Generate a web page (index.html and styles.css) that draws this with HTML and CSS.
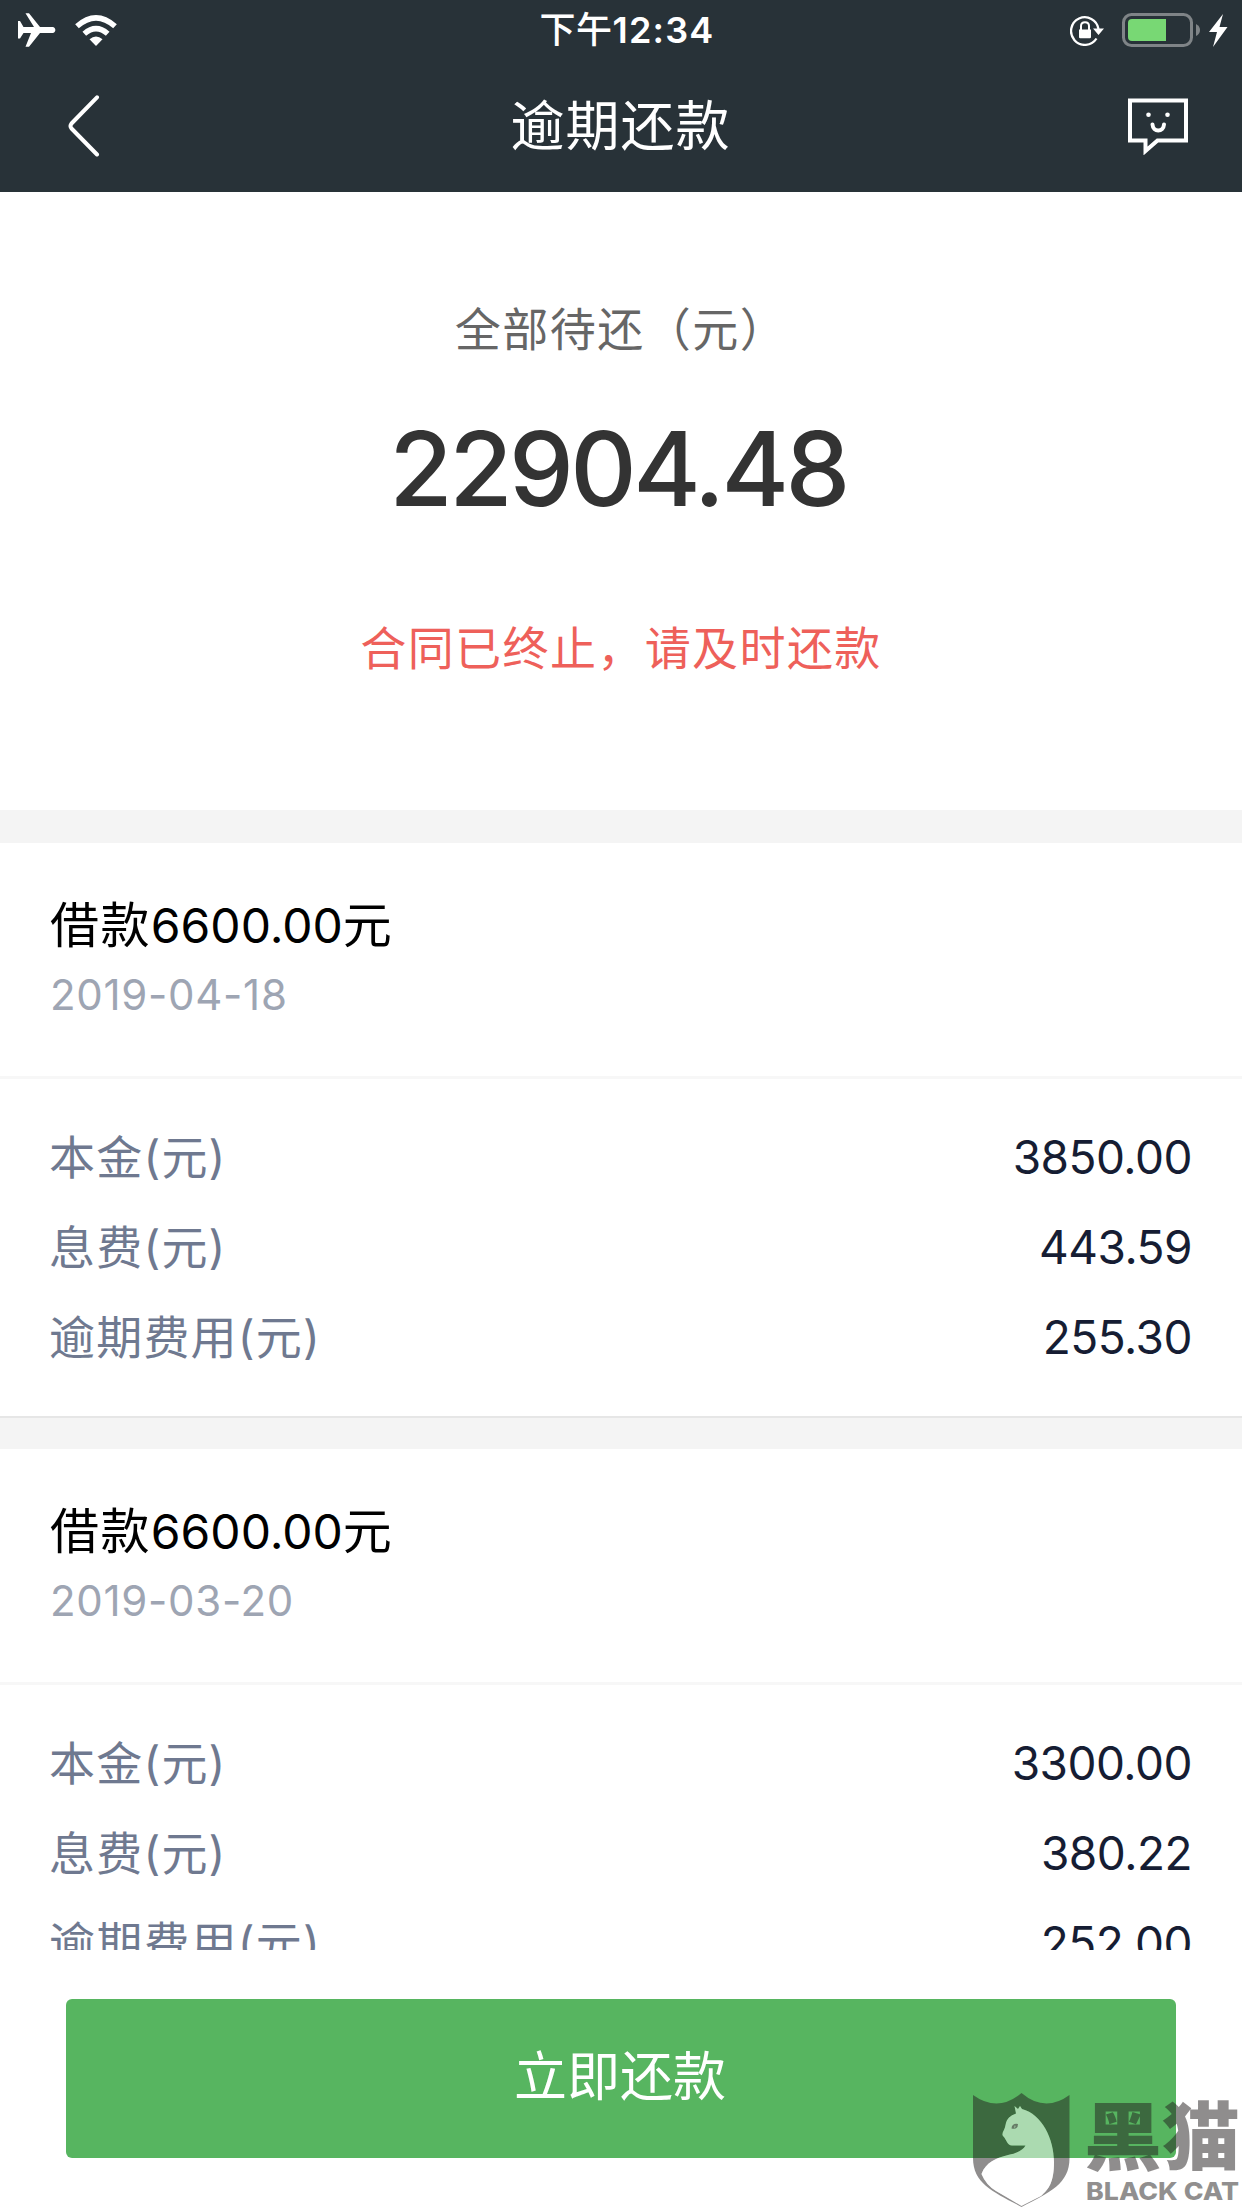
FILE: index.html
```
<!DOCTYPE html>
<html lang="zh-CN">
<head>
    <meta charset="UTF-8">
    <meta name="viewport" content="width=device-width, initial-scale=1.0">
    <title>逾期还款</title>
    <link rel="stylesheet" href="styles.css">
</head>
<body>
    <div class="app">
        <header class="header">
            <div class="status-bar">
                <div class="status-left">
                    <svg class="icon-plane" width="38" height="34" viewBox="0 0 38 34">
                        <path fill="#fff" d="M0 8H2L5.500 14H16L7.500 .3H11L22 14H34.500C38.300 14 38.300 20 34.500 20H22L11 33.700H7.500L13 20H5.500L2 25.500H0Z"/>
                    </svg>
                    <svg class="icon-wifi" width="42" height="31" viewBox="0 0 42 31">
                        <path fill="#fff" d="M21 31L14.500 24.300Q21 18.500 27.500 24.300Z"/>
                        <path fill="none" stroke="#fff" stroke-width="5.500" d="M9.300 18.800Q21 8.500 32.700 18.800M2 11.300Q21 -5.500 40 11.300"/>
                    </svg>
                </div>
                <div class="time">下午<span>12:34</span></div>
                <div class="status-right">
                    <svg class="icon-lock" width="34" height="31" viewBox="0 0 34 31">
                        <path fill="none" stroke="#fff" stroke-width="2.300" d="M26.500 23.500A13.800 13.800 0 1 1 28.500 14"/>
                        <path fill="#fff" d="M23 13.500H34L28.500 20ZM9 14.500H21V22Q21 23.300 19.800 23.300H10.200Q9 23.300 9 22Z"/>
                        <path fill="none" stroke="#fff" stroke-width="2" d="M11 15V11Q11 7.300 15 7.300T19 11V15"/>
                    </svg>
                    <svg class="icon-battery" width="78" height="34" viewBox="0 0 78 34">
                        <rect x="1.500" y="1.500" width="68" height="31" rx="8" fill="none" stroke="#7f8487" stroke-width="3"/>
                        <path fill="#7f8487" d="M74 11Q78 13 78 17T74 23Z"/>
                        <path fill="#78d874" d="M10 6H44V28H10Q6 28 6 24V10Q6 6 10 6Z"/>
                    </svg>
                    <svg class="icon-bolt" width="19" height="33" viewBox="0 0 19 33">
                        <path fill="#fff" d="M14 0L0 18H8L4 33L18.500 13H10.500Z"/>
                    </svg>
                </div>
            </div>
            <div class="nav-bar">
                <a class="back">
                    <svg width="32" height="64" viewBox="0 0 32 64">
                        <path fill="none" stroke="#fff" stroke-width="4" stroke-linecap="round" stroke-linejoin="round" d="M29 3.300L3.500 29.500Q1.500 32 3.500 34.500L29 60.500"/>
                    </svg>
                </a>
                <h1>逾期还款</h1>
                <a class="service">
                    <svg width="60" height="57" viewBox="0 0 60 57">
                        <path fill="none" stroke="#fff" stroke-width="4" d="M2 2.500H58V42.500H29.500L17.500 53V42.500H2Z"/>
                        <path fill="none" stroke="#fff" stroke-width="4" stroke-linecap="round" d="M24.500 26.500C25 34.500 35.500 34.500 36 26.500"/>
                        <circle cx="20.500" cy="16.800" r="2.300" fill="#fff"/>
                        <circle cx="39.500" cy="16.800" r="2.300" fill="#fff"/>
                    </svg>
                </a>
            </div>
        </header>

        <main class="content">
            <section class="summary">
                <p class="summary-label">全部待还（元）</p>
                <p class="summary-amount">22904.48</p>
                <p class="summary-tip">合同已终止，请及时还款</p>
            </section>

            <section class="loan">
                <div class="loan-head">
                    <h2>借款<span>6600.00</span>元</h2>
                    <p class="date">2019-04-18</p>
                </div>
                <div class="loan-body">
                    <div class="row"><span>本金(元)</span><span class="value">3850.00</span></div>
                    <div class="row"><span>息费(元)</span><span class="value">443.59</span></div>
                    <div class="row"><span>逾期费用(元)</span><span class="value">255.30</span></div>
                </div>
            </section>

            <section class="loan">
                <div class="loan-head">
                    <h2>借款<span>6600.00</span>元</h2>
                    <p class="date">2019-03-20</p>
                </div>
                <div class="loan-body">
                    <div class="row"><span>本金(元)</span><span class="value">3300.00</span></div>
                    <div class="row"><span>息费(元)</span><span class="value">380.22</span></div>
                    <div class="row"><span>逾期费用(元)</span><span class="value">252.00</span></div>
                </div>
            </section>
        </main>

        <footer class="footer">
            <button class="pay-btn">立即还款</button>
        </footer>

        <!-- watermark -->
        <svg class="watermark" width="270" height="116" viewBox="0 0 270 116">
            <path class="ink" fill-rule="evenodd" d="M1 3Q26 21 49.500 1Q73 21 97.500 3V66C97.500 92 78 100 49.500 115C22 100 1 92 1 66ZM9.500 82C14 70 24 66 36 63C46 61 51 58 53.500 53.500H40C35 53.500 35 48 31 44C29 41 33 38 33.500 33C35 26 38 24 44 21.500L42.500 14L46 17L48 14L50 17C70 22 82 47 82 70C82 90 77 97 69 104L49.500 114L24 99Q14 93 9.500 82Z"/>
            <path class="cat" d="M9.500 82C14 70 24 66 36 63C46 61 51 58 53.500 53.500H40C35 53.500 35 48 31 44C29 41 33 38 33.500 33C35 26 38 24 44 21.500L42.500 14L46 17L48 14L50 17C70 22 82 47 82 70C82 90 77 97 69 104L49.500 113L24 99Q14 93 9.500 82Z"/>
            <path class="ink" fill-rule="evenodd" d="M39.500 36.500Q40 31 46 32Q46 38 39.500 36.500ZM43 33L42 36L43.500 35Z"/>
            <text class="ink mark-cn" x="112" y="72" textLength="156" lengthAdjust="spacingAndGlyphs">黑猫</text>
            <text class="ink mark-en" x="114" y="108" textLength="153" lengthAdjust="spacingAndGlyphs">BLACK CAT</text>
        </svg>
    </div>
</body>
</html>
```
FILE: styles.css
```
* {
    margin: 0;
    padding: 0;
    box-sizing: border-box;
}

body {
    background: #fff;
    font-family: "Inter", "Noto Sans CJK SC", sans-serif;
}

.app {
    position: relative;
    display: flex;
    flex-direction: column;
    width: 1242px;
    height: 2208px;
    overflow: hidden;
}

svg {
    display: block;
}

/* header */
.header {
    height: 192px;
    background: #283238;
    color: #fff;
}

.status-bar {
    display: grid;
    grid-template-columns: 1fr auto 1fr;
    align-items: center;
    height: 60px;
    padding: 0 14px 0 18px;
}

.status-left,
.status-right {
    display: flex;
    align-items: center;
}

.status-left {
    gap: 19px;
}

.status-right {
    justify-content: flex-end;
}

.icon-lock {
    margin-right: 18px;
}

.icon-bolt {
    margin-left: 9px;
}

.time {
    padding-left: 8px;
    font-size: 36px;
    font-weight: 500;
    line-height: 60px;
    letter-spacing: 0.5px;
}

.time span {
    font-weight: 600;
    letter-spacing: 1.2px;
}

.nav-bar {
    display: grid;
    grid-template-columns: 1fr auto 1fr;
    align-items: center;
    height: 132px;
    padding: 0 54px 0 68px;
}

.service {
    justify-self: end;
}

.nav-bar h1 {
    /* evens out the different side paddings */
    margin-left: -15px;
    padding-top: 2px;
    font-size: 54px;
    font-weight: 400;
    line-height: 80px;
    letter-spacing: 1px;
}

/* total */
.summary {
    height: 618px;
    padding-top: 102px;
    text-align: center;
}

.summary-label {
    font-size: 46px;
    line-height: 70px;
    letter-spacing: 1.5px;
    color: #666;
}

.summary-amount {
    margin-top: 35px;
    padding-right: 6px;
    font-size: 103px;
    font-weight: 500;
    line-height: 140px;
    letter-spacing: -3.6px;
    color: #333;
}

.summary-tip {
    margin-top: 74px;
    font-size: 46px;
    line-height: 70px;
    letter-spacing: 1.4px;
    color: #ee605a;
}

/* loans */
.loan {
    height: 606px;
    padding-top: 33px;
    background: #f4f4f4;
}

.loan + .loan {
    box-shadow: inset 0 2px 0 #e6e6e6;
}

.loan-head {
    height: 236px;
    padding: 47px 50px 0;
    border-bottom: 3px solid #f7f7f7;
    background: #fff;
}

.loan-head h2 {
    font-size: 49px;
    font-weight: 400;
    line-height: 72px;
    letter-spacing: 1.4px;
    color: #000;
}

.loan-head h2 span {
    font-size: 48px;
    letter-spacing: 0;
}

.date {
    font-size: 42px;
    line-height: 66px;
    letter-spacing: 0.7px;
    color: #9ea5b3;
}

.loan-body {
    height: 337px;
    padding: 33px 50px 0 49px;
    background: #fff;
}

.row {
    display: flex;
    justify-content: space-between;
    font-size: 46px;
    line-height: 90px;
    letter-spacing: 1.2px;
    color: #6f7990;
}

.value {
    letter-spacing: -0.5px;
    color: #161d33;
}

/* bottom button */
.content {
    flex: 1;
    overflow: hidden;
}

.footer {
    height: 258px;
    padding: 49px 66px 0;
    background: #fff;
}

.pay-btn {
    display: block;
    width: 100%;
    height: 159px;
    padding: 0 2px 11px 0;
    border: none;
    border-radius: 6px;
    background: #57b560;
    color: #fff;
    font-family: inherit;
    font-size: 53px;
}

.watermark {
    position: absolute;
    right: 0;
    bottom: 0;
}

.ink {
    fill: rgba(35, 31, 32, 0.51);
}

.cat {
    fill: rgba(255, 255, 255, 0.5);
}

.mark-cn {
    font-family: "Noto Sans CJK SC", sans-serif;
    font-size: 74px;
    font-weight: 900;
}

.mark-en {
    font-family: "Inter", sans-serif;
    font-size: 24px;
    font-weight: 800;
}
```
